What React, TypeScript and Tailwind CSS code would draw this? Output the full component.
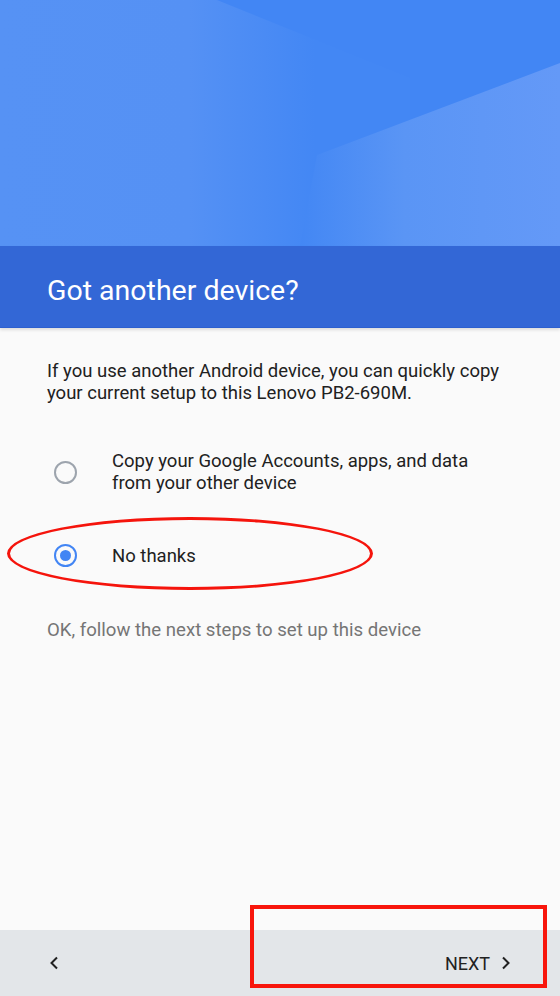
import React from 'react'

function Hero() {
  // layered blue planes of the setup-wizard header
  return (
    <div className="h-[246px] w-full overflow-hidden bg-[#4286f4]">
      <svg width="560" height="246" viewBox="0 0 560 246" className="block">
        <defs>
          <linearGradient id="leftPlane" gradientUnits="userSpaceOnUse" x1="0" y1="0" x2="315" y2="0">
            <stop offset="0" stopColor="#5692f4" />
            <stop offset="0.6" stopColor="#5591f4" />
            <stop offset="1" stopColor="#4387f4" />
          </linearGradient>
          <linearGradient id="rightPlane" gradientUnits="userSpaceOnUse" x1="300" y1="0" x2="560" y2="0">
            <stop offset="0" stopColor="#4387f4" />
            <stop offset="0.4" stopColor="#5a95f5" />
            <stop offset="1" stopColor="#6499f7" />
          </linearGradient>
        </defs>
        <polygon points="0,0 217,0 410,78 410,246 0,246" fill="url(#leftPlane)" />
        <polygon points="560,63 317,155 300,246 560,246" fill="url(#rightPlane)" />
      </svg>
    </div>
  )
}

function Radio({ checked }: { checked?: boolean }) {
  if (checked) {
    return (
      <div className="flex h-[23px] w-[23px] items-center justify-center rounded-full border-2 border-[#4285f4]">
        <div className="h-[11px] w-[11px] rounded-full bg-[#4285f4]" />
      </div>
    )
  }
  return <div className="h-[23px] w-[23px] rounded-full border-2 border-[#9da4ad]" />
}

export default function App() {
  return (
    <div
      className="relative flex h-[996px] w-[560px] flex-col overflow-hidden bg-[#fafafa]"
      style={{ fontFamily: 'Roboto, "Noto Sans", sans-serif' }}
    >
      <Hero />

      <div className="flex h-[82px] items-end border-b border-[#2c5fcf] bg-[#3367d6] px-[47px] pb-[19px] shadow-[0_2px_3px_rgba(0,0,0,0.12)]">
        <h1 className="text-[28.5px] leading-[34px] text-white">Got another device?</h1>
      </div>

      <main className="flex-1 px-[47px] pt-[32px]">
        <p className="text-[18.5px] leading-[22px] text-[#212121]">
          If you use another Android device, you can quickly copy
          <br />
          your current setup to this Lenovo PB2-690M.
        </p>

        <div className="mt-[46px] flex items-center">
          <div className="w-[65px] shrink-0 pl-[7px]">
            <Radio />
          </div>
          <span className="text-[18.5px] leading-[22px] text-[#212121]">
            Copy your Google Accounts, apps, and data
            <br />
            from your other device
          </span>
        </div>

        <div className="mt-[50px] flex items-center">
          <div className="w-[65px] shrink-0 pl-[7px]">
            <Radio checked />
          </div>
          <span className="text-[18.5px] leading-[22px] text-[#212121]">No thanks</span>
        </div>

        <p className="mt-[52px] text-[18.6px] leading-[22px] text-[#757575]">
          OK, follow the next steps to set up this device
        </p>
      </main>

      <footer className="flex h-[66px] items-center justify-between bg-[#e3e6e9] pl-[48px] pr-[48px]">
        <svg width="12" height="14" viewBox="0 0 12 14" className="text-[#212121]">
          <path d="M9 1.5 L3.5 7 L9 12.5" fill="none" stroke="currentColor" strokeWidth="2" />
        </svg>
        <div className="flex items-center gap-[10px] text-[18px] text-[#212121]">
          <span>NEXT</span>
          <svg width="12" height="14" viewBox="0 0 12 14">
            <path d="M3 1.5 L8.5 7 L3 12.5" fill="none" stroke="#212121" strokeWidth="2" />
          </svg>
        </div>
      </footer>

      {/* red annotation marks */}
      <div className="pointer-events-none absolute left-[7px] top-[517px] h-[73px] w-[366px] rounded-[50%] border-[3px] border-[#f5140c]" />
      <div className="pointer-events-none absolute left-[250px] top-[905px] h-[83px] w-[297px] border-4 border-[#f8160c]" />
    </div>
  )
}
